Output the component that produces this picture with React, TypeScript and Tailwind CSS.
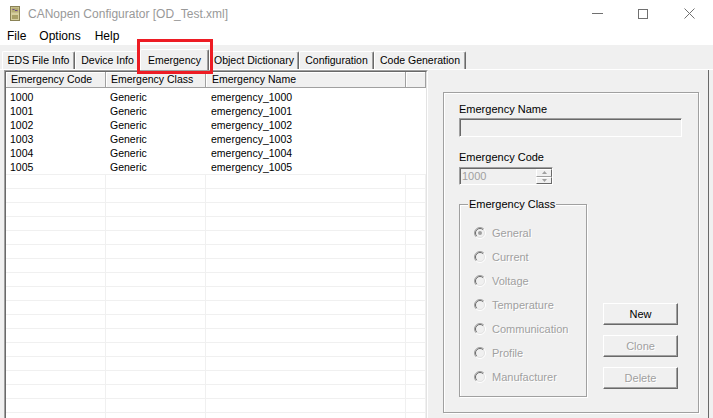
import React from 'react';

const rows = [
  ['1000', 'Generic', 'emergency_1000'],
  ['1001', 'Generic', 'emergency_1001'],
  ['1002', 'Generic', 'emergency_1002'],
  ['1003', 'Generic', 'emergency_1003'],
  ['1004', 'Generic', 'emergency_1004'],
  ['1005', 'Generic', 'emergency_1005'],
];

const classes = ['General', 'Current', 'Voltage', 'Temperature', 'Communication', 'Profile', 'Manufacturer'];

const tabs = [
  { label: 'EDS File Info', w: 'w-[73px]' },
  { label: 'Device Info', w: 'w-[65px]' },
  { label: 'Emergency', w: 'w-[69px]', active: true },
  { label: 'Object Dictionary', w: 'w-[90px]' },
  { label: 'Configuration', w: 'w-[75px]' },
  { label: 'Code Generation', w: 'w-[92px]' },
];

const Radio = ({ checked }: { checked?: boolean }) => (
  <svg width="12" height="12" viewBox="0 0 12 12">
    <circle cx="6" cy="6" r="5" fill="#f0f0f0" />
    <path d="M2.1 9.9 A5.5 5.5 0 0 1 9.9 2.1" fill="none" stroke="#a0a0a0" />
    <path d="M9.9 2.1 A5.5 5.5 0 0 1 2.1 9.9" fill="none" stroke="#ffffff" />
    <path d="M2.8 9.2 A4.5 4.5 0 0 1 9.2 2.8" fill="none" stroke="#696969" />
    <path d="M9.2 2.8 A4.5 4.5 0 0 1 2.8 9.2" fill="none" stroke="#e3e3e3" />
    {checked && <circle cx="6" cy="6" r="2" fill="#a0a0a0" />}
  </svg>
);

const Button = ({ label, disabled }: { label: string; disabled?: boolean }) => (
  <div
    className={`w-[75px] h-[22px] flex items-center justify-center border border-t-white border-l-white border-r-[#696969] border-b-[#696969] shadow-[inset_-1px_-1px_0_#a0a0a0] bg-[#f0f0f0] ${
      disabled ? 'text-[#a0a0a0] [text-shadow:1px_1px_0_#fff]' : 'text-black'
    }`}
  >
    {label}
  </div>
);

const App = () => {
  return (
    <div className="relative w-[713px] h-[418px] overflow-hidden bg-[#f0f0f0] font-['Liberation_Sans',Arial,sans-serif] text-black">
      {/* Title bar */}
      <div className="h-[27px] bg-white flex items-center">
        <svg className="ml-[10px]" width="10" height="15" viewBox="0 0 10 15">
          <rect x="0.5" y="0.5" width="9" height="14" fill="#d6cf9e" stroke="#8a8256" />
          <rect x="1.5" y="1.5" width="7" height="5" fill="#b4ab74" />
          <path d="M2.5 3.5h2M5 4.5h2.5" stroke="#6b4c8a" />
          <rect x="2" y="9" width="6" height="4" fill="#a89f66" />
        </svg>
        <span className="ml-[8px] text-[12px] text-[#999999]">CANopen Configurator [OD_Test.xml]</span>
        <div className="ml-auto mr-[1px] flex h-full">
          <div className="w-[46px] flex items-center justify-center">
            <div className="w-[11px] h-[1px] bg-[#707070]" />
          </div>
          <div className="w-[46px] flex items-center justify-center">
            <div className="w-[10px] h-[10px] border border-[#707070]" />
          </div>
          <div className="w-[46px] flex items-center justify-center">
            <svg width="11" height="11" viewBox="0 0 11 11">
              <path d="M0.5 0.5 L10.5 10.5 M10.5 0.5 L0.5 10.5" stroke="#707070" strokeWidth="1" />
            </svg>
          </div>
        </div>
      </div>

      {/* Menu bar */}
      <div className="h-[18px] bg-white flex items-center text-[12px]">
        <span className="ml-[7px]">File</span>
        <span className="ml-[13px]">Options</span>
        <span className="ml-[14px]">Help</span>
      </div>

      {/* Tab strip */}
      <div className="h-[24px] flex items-end pl-[2px] text-[10.5px]">
        {tabs.map((t) =>
          t.active ? (
            <div
              key={t.label}
              className={`${t.w} h-[21px] -mb-[1px] relative z-10 flex items-start pt-[3px] justify-center bg-[#f0f0f0] border-t border-l border-white border-r border-r-[#696969] rounded-t-[2px] shadow-[inset_-1px_0_0_#a0a0a0]`}
            >
              {t.label}
            </div>
          ) : (
            <div
              key={t.label}
              className={`${t.w} h-[18px] flex items-center justify-center bg-[#f0f0f0] border-t border-l border-white border-r border-r-[#696969] rounded-t-[2px] shadow-[inset_-1px_0_0_#a0a0a0]`}
            >
              {t.label}
            </div>
          )
        )}
      </div>

      {/* Tab page */}
      <div className="h-[349px] flex border-t border-white pl-[4px]">
        {/* List view */}
        <div className="w-[424px] h-[360px] border-t border-l border-[#a0a0a0] border-r border-r-white bg-white">
          <div className="h-full border-t border-l border-[#696969] border-r border-r-[#e3e3e3] text-[10.5px] overflow-hidden">
            <div className="h-[16px] flex bg-[#f0f0f0] border-b border-[#a0a0a0] leading-[15px]">
              <div className="w-[100px] pl-[5px] border-r border-[#a0a0a0] shadow-[inset_1px_1px_0_#fff]">Emergency Code</div>
              <div className="w-[100px] pl-[5px] border-r border-[#a0a0a0] shadow-[inset_1px_1px_0_#fff]">Emergency Class</div>
              <div className="w-[200px] pl-[6px] border-r border-[#a0a0a0] shadow-[inset_1px_1px_0_#fff]">Emergency Name</div>
              <div className="w-[20px] border-r border-[#a0a0a0] shadow-[inset_1px_1px_0_#fff]" />
            </div>
            <div className="mt-[2px]">
              {rows.map((r) => (
                <div key={r[0]} className="h-[14px] flex leading-[14px]">
                  <div className="w-[100px] pl-[4px]">{r[0]}</div>
                  <div className="w-[100px] pl-[4px]">{r[1]}</div>
                  <div className="w-[200px] pl-[5px]">{r[2]}</div>
                </div>
              ))}
              {Array.from({ length: 18 }).map((_, i) => (
                <div key={i} className="h-[14px] flex border-t border-[#f0f0f0]">
                  <div className="w-[100px] border-r border-[#f0f0f0]" />
                  <div className="w-[100px] border-r border-[#f0f0f0]" />
                  <div className="w-[200px] border-r border-[#f0f0f0]" />
                  <div className="w-[20px] border-r border-[#f0f0f0]" />
                </div>
              ))}
            </div>
          </div>
        </div>

        {/* Right panel */}
        <div className="w-[280px] pl-[15px] pt-[22px] text-[11px]">
          <div className="w-[256px] h-[321px] border border-[#a0a0a0] shadow-[1px_1px_0_#fff,inset_1px_1px_0_#fff] pl-[15px] pt-[10px]">
            <div className="h-[13px] leading-[13px]">Emergency Name</div>
            <div className="mt-[2px] w-[223px] h-[19px] bg-[#f0f0f0] border border-t-[#a0a0a0] border-l-[#a0a0a0] border-r-white border-b-white shadow-[inset_1px_1px_0_#696969]" />
            <div className="mt-[14px] h-[13px] leading-[13px]">Emergency Code</div>
            <div className="mt-[3px] w-[94px] h-[18px] flex bg-[#f0f0f0] border border-t-[#a0a0a0] border-l-[#a0a0a0] border-r-white border-b-white shadow-[inset_1px_1px_0_#696969]">
              <div className="flex-1 pl-[2px] pt-[2px] leading-[13px] text-[#a0a0a0]">1000</div>
              <div className="w-[16px] mt-[1px] flex flex-col">
                <div className="h-[8px] flex items-center justify-center border border-t-white border-l-white border-r-[#696969] border-b-[#a0a0a0]">
                  <svg width="5" height="3" viewBox="0 0 5 3">
                    <path d="M2.5 0 L5 3 L0 3 Z" fill="#a0a0a0" />
                  </svg>
                </div>
                <div className="h-[8px] flex items-center justify-center border border-t-white border-l-white border-r-[#696969] border-b-[#696969]">
                  <svg width="5" height="3" viewBox="0 0 5 3">
                    <path d="M0 0 L5 0 L2.5 3 Z" fill="#a0a0a0" />
                  </svg>
                </div>
              </div>
            </div>

            <div className="flex mt-[19px]">
              <div className="relative w-[128px] h-[193px] border border-[#a0a0a0] shadow-[1px_1px_0_#fff,inset_1px_1px_0_#fff] pt-[16px]">
                <span className="absolute left-[8px] -top-[7px] px-[1px] leading-[13px] bg-[#f0f0f0]">Emergency Class</span>
                {classes.map((c, i) => (
                  <div key={c} className="h-[24px] flex items-center pl-[14px]">
                    <Radio checked={i === 0} />
                    <span className="ml-[6px] text-[#a0a0a0] [text-shadow:1px_1px_0_#fff]">{c}</span>
                  </div>
                ))}
              </div>
              <div className="ml-[16px] self-end mb-[8px] flex flex-col gap-[10px]">
                <Button label="New" />
                <Button label="Clone" disabled />
                <Button label="Delete" disabled />
              </div>
            </div>
          </div>
        </div>

        <div className="w-[1px] h-full bg-[#696969]" />
        <div className="w-[4px] h-full bg-[#f0f0f0]" />
      </div>

      {/* Annotation */}
      <div className="absolute left-[137px] top-[39px] w-[76px] h-[35px] border-[3px] border-[#ed1c24]" />
    </div>
  );
};

export default App;
